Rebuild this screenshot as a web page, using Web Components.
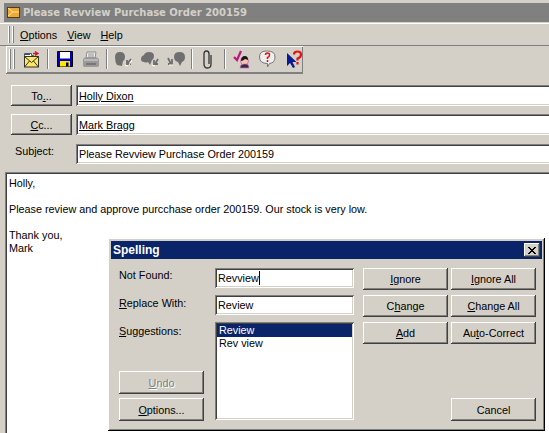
<!DOCTYPE html>
<html>
<head>
<meta charset="utf-8">
<title>Please Revview Purchase Order 200159</title>
<style>
  html, body { margin: 0; padding: 0; height: 100%; overflow: hidden; background: #d4d0c8; }
  body { font: 10.8px "Liberation Sans", sans-serif; color: #000; }
  u { text-underline-offset: 1px; }
</style>
</head>
<body>

<mail-window>
  <title-bar slot="title">Please Revview Purchase Order 200159</title-bar>
  <menu-bar slot="menu">
    <span><u>O</u>ptions</span>
    <span><u>V</u>iew</span>
    <span><u>H</u>elp</span>
  </menu-bar>
  <tool-bar slot="tools"></tool-bar>
  <addr-row slot="addr" label="To..." key="." value="Holly Dixon" link></addr-row>
  <addr-row slot="addr" label="Cc..." key="C" value="Mark Bragg" link></addr-row>
  <addr-row slot="addr" plain label="Subject:" value="Please Revview Purchase Order 200159"></addr-row>
  <mail-body slot="body">
    <div>Holly,</div>
    <div>&nbsp;</div>
    <div>Please review and approve purcchase order 200159. Our stock is very low.</div>
    <div>&nbsp;</div>
    <div>Thank you,</div>
    <div>Mark</div>
  </mail-body>
  <spell-dialog slot="dialog"></spell-dialog>
</mail-window>

<script>
// shared look of the old 3d controls
const raised = 'box-shadow: inset -1px -1px 0 #404040, inset 1px 1px 0 #fff, inset -2px -2px 0 #808080;'
const sunken = 'box-shadow: inset 1px 1px 0 #808080, inset -1px -1px 0 #fff, inset 2px 2px 0 #404040, inset -2px -2px 0 #d4d0c8;'
const uiFont = '10.8px "Liberation Sans", sans-serif'

class MailWindow extends HTMLElement {
  constructor() {
    super();
    this.attachShadow({ mode: 'open' });
    this.shadowRoot.innerHTML = `
      <style>
        :host { display: flex; flex-direction: column; position: relative; width: 549px; height: 433px; overflow: hidden; background: #d4d0c8; }
        .addr { display: flex; flex-direction: column; gap: 8px; padding: 12px 0 0 11px; }
      </style>
      <slot name="title"></slot>
      <slot name="menu"></slot>
      <slot name="tools"></slot>
      <div class="addr"><slot name="addr"></slot></div>
      <slot name="body"></slot>
      <slot name="dialog"></slot>
    `;
  }
}

class TitleBar extends HTMLElement {
  constructor() {
    super();
    this.attachShadow({ mode: 'open' });
    this.shadowRoot.innerHTML = `
      <style>
        :host { display: flex; align-items: center; gap: 3px; height: 19px; margin: 3px 0 1px 4px; padding-left: 3px; background: #808080; color: #d4d0c8; font: bold 10px "DejaVu Sans", sans-serif; white-space: nowrap; }
        svg { display: block; }
      </style>
      <svg width="13" height="11" viewBox="0 0 13 11">
        <rect x="0.500" y="0.500" width="12" height="10" fill="#f0a830" stroke="#5a3a10"/>
        <path d="M1 1l5 4 -5 4M6 5h6" fill="none" stroke="#ffe9b0"/>
      </svg>
      <slot></slot>
    `;
  }
}

class MenuBar extends HTMLElement {
  constructor() {
    super();
    this.attachShadow({ mode: 'open' });
    this.shadowRoot.innerHTML = `
      <style>
        :host { display: flex; align-items: center; gap: 10px; height: 21px; padding-left: 9px; border-top: 1px solid #fff; border-bottom: 1px solid #808080; }
        .grip { width: 1px; height: 17px; background: #808080; box-shadow: -1px 0 0 #fff, 3px 0 0 #fff, 4px 0 0 #808080; }
        ::slotted(span) { display: block; font: ${uiFont}; }
      </style>
      <div class="grip"></div>
      <slot></slot>
    `;
  }
}

class ToolBar extends HTMLElement {
  constructor() {
    super();
    this.attachShadow({ mode: 'open' });
    const gray = '#6f6f6f';
    this.shadowRoot.innerHTML = `
      <style>
        :host { display: flex; align-items: center; box-sizing: border-box; width: 297px; height: 27px; margin-left: 6px; padding: 0 0 1px 4px; box-shadow: inset 1px 1px 0 #fff, inset -1px -1px 0 #808080, 0 1px 0 #808080; }
        .grip { width: 1px; height: 20px; margin-right: 9px; background: #808080; box-shadow: -1px 0 0 #fff, 3px 0 0 #fff, 4px 0 0 #808080; }
        .sep { width: 1px; height: 20px; background: #808080; box-shadow: 1px 0 0 #fff; }
        svg { display: block; flex: none; }
      </style>
      <div class="grip"></div>
      <svg style="margin-left:3px" width="17" height="17" viewBox="0 0 17 17">
        <path d="M1.500 2.500h7v2h2v1h-9z" fill="#fff" stroke="#555"/>
        <path d="M2 3.500h5" stroke="#2050b0"/>
        <path d="M10 2.500h4M12 .5l3 2 -3 2" fill="none" stroke="#d0182c" stroke-width="1.300"/>
        <rect x="1.500" y="5.500" width="14" height="10.500" fill="#ffe860" stroke="#333"/>
        <path d="M1.500 5.500l7 6 7 -6M1.500 16l5 -6M15.500 16l-5 -6" fill="none" stroke="#333"/>
      </svg>
      <div class="sep" style="margin-left:7px"></div>
      <svg style="margin-left:9px" width="16" height="16" viewBox="0 0 16 16">
        <path d="M.5 .5h15v15h-15z" fill="#0000c0" stroke="#000"/>
        <rect x="3" y="1" width="10" height="6.500" fill="#fff"/>
        <rect x="3" y="10" width="10" height="5.500" fill="#ffe800"/>
        <rect x="9" y="11.500" width="2.500" height="4" fill="#000"/>
      </svg>
      <svg style="margin-left:9px" width="18" height="17" viewBox="0 0 18 17">
        <path d="M5 1h9l-1 6H4z" fill="#f4f4f4" stroke="#8a8a8a"/>
        <path d="M6 3h6M6 5h6" stroke="#8a8a8a"/>
        <path d="M1 8l3-2h10l3 2v7l-1 1H2l-1-1z" fill="#9a9a9a"/>
        <path d="M2 9h14" stroke="#d8d8d8"/>
        <rect x="4" y="12" width="10" height="2" fill="#777"/>
      </svg>
      <div class="sep" style="margin-left:6px"></div>
      <svg style="margin-left:8px" width="17" height="16" viewBox="0 0 17 16">
        <path d="M0 6q0-5 5-5 5 0 5 5 0 3-2 4l-1 5-5-1q-2-3-2-8z" fill="${gray}"/>
        <path d="M16 8l-4 5M12 9v4h4" fill="none" stroke="${gray}" stroke-width="1.800"/>
        <path d="M10 14l3 1M17 9l-3 5" stroke="#fff"/>
      </svg>
      <svg style="margin-left:9px" width="18" height="16" viewBox="0 0 18 16">
        <path d="M0 8q0-3 3-4 1-3 5-3 5 0 5 4 0 3-2 4l-2 5-2-3q-2 1-4 0-3 0-3-3z" fill="${gray}"/>
        <path d="M17 8l-3 5M13 9v4h4" fill="none" stroke="${gray}" stroke-width="1.800"/>
        <path d="M11 14l3 1" stroke="#fff"/>
      </svg>
      <svg style="margin-left:8px" width="18" height="16" viewBox="0 0 18 16">
        <path d="M7 6q0-5 5.500-5 5.500 0 5.500 5 0 4-3 5l-2 4-2-4q-4-1-4-5z" fill="${gray}"/>
        <path d="M1 7l3 6M5 8v5H1" fill="none" stroke="${gray}" stroke-width="1.800"/>
        <path d="M2 14h4" stroke="#fff"/>
      </svg>
      <div class="sep" style="margin-left:6px"></div>
      <svg style="margin-left:10px" width="11" height="19" viewBox="0 0 11 19">
        <path d="M9 5v9q0 4-3.500 4T2 14V4q0-3 2.500-3T7 4v10" fill="none" stroke="#333" stroke-width="1.300"/>
      </svg>
      <div class="sep" style="margin-left:11px"></div>
      <svg style="margin-left:8px" width="18" height="19" viewBox="0 0 18 19">
        <path d="M1 7l3 3 4-9" fill="none" stroke="#c01878" stroke-width="2.200"/>
        <circle cx="11.500" cy="11" r="4" fill="#f0c8a8" stroke="#d070c0"/>
        <path d="M8 11q0-5 4-5 3 0 3 4l-3-1q-2 2-4 2z" fill="#181818"/>
        <path d="M7 18q0-4 4-4h2q3 0 3 4z" fill="#303040" stroke="#d070c0" stroke-width=".7"/>
      </svg>
      <svg style="margin-left:8px" width="17" height="18" viewBox="0 0 17 18">
        <path d="M8.500 1q7.500 0 7.500 6t-5.500 6.500l-2 3.500v-3.500q-8 0-8-6.500t8-6z" fill="#eee" stroke="#777"/>
        <path d="M6.500 5q0-2 2-2t2 2-2 2.500v1.500" fill="none" stroke="#e01010" stroke-width="1.500"/>
        <path d="M8.500 10v2" stroke="#e01010" stroke-width="1.500"/>
      </svg>
      <svg style="margin-left:10px" width="17" height="18" viewBox="0 0 17 18">
        <path d="M1 3v13l3-3 3 5 2-1-2.500-5h4z" fill="#0a1a90"/>
        <path d="M8 4.500q0-3 3.500-3t3.500 3-3.500 4v2" fill="none" stroke="#e81010" stroke-width="2.200"/>
        <path d="M11.500 12v2.500" stroke="#e81010" stroke-width="2.200"/>
      </svg>
    `;
  }
}

class WinButton extends HTMLElement {
  constructor() {
    super();
    this.attachShadow({ mode: 'open' });
    this.shadowRoot.innerHTML = `
      <style>
        :host { display: flex; align-items: center; justify-content: center; box-sizing: border-box; height: 22px; background: #d4d0c8; font: ${uiFont}; white-space: nowrap; ${raised} }
        :host([disabled]) { color: #808080; text-shadow: 1px 1px 0 #fff; }
      </style>
      <slot></slot>
    `;
  }
}
customElements.define('win-button', WinButton);

class AddrRow extends HTMLElement {
  constructor() {
    super();
    this.attachShadow({ mode: 'open' });
    const label = this.getAttribute('label');
    const key = this.getAttribute('key');
    const value = this.getAttribute('value');
    const shownLabel = key ? label.replace(key, '<u>' + key + '</u>') : label;
    const left = this.hasAttribute('plain')
      ? `<div class="plain">${shownLabel}</div>`
      : `<win-button class="btn">${shownLabel}</win-button>`;
    const shownValue = this.hasAttribute('link') ? `<u>${value}</u>` : value;
    this.shadowRoot.innerHTML = `
      <style>
        :host { display: flex; height: 21px; gap: 4px; font: ${uiFont}; }
        :host([plain]) { margin-top: 1px; height: 20px; }
        .btn { width: 61px; height: 21px; }
        .plain { width: 61px; padding-left: 4px; box-sizing: border-box; line-height: 14px; }
        .value { flex: 1; margin-right: -4px; display: flex; align-items: center; padding-left: 3px; background: #fff; white-space: nowrap; ${sunken} }
      </style>
      ${left}
      <div class="value"><span>${shownValue}</span></div>
    `;
  }
}

class MailBody extends HTMLElement {
  constructor() {
    super();
    this.attachShadow({ mode: 'open' });
    this.shadowRoot.innerHTML = `
      <style>
        :host { display: block; flex: 1; margin: 8px -4px -4px 5px; padding: 5px 0 0 4px; background: #fff; font: 10.8px/13px "Liberation Sans", sans-serif; ${sunken} }
      </style>
      <slot></slot>
    `;
  }
}

class SpellDialog extends HTMLElement {
  constructor() {
    super();
    this.attachShadow({ mode: 'open' });
    this.shadowRoot.innerHTML = `
      <style>
        :host { position: absolute; left: 108px; top: 238px; width: 437px; height: 193px; box-sizing: border-box; padding: 3px; background: #d4d0c8; font: ${uiFont}; box-shadow: inset -1px -1px 0 #000, inset 1px 1px 0 #fff, inset -2px -2px 0 #808080; }
        .head { display: flex; align-items: center; justify-content: space-between; height: 18px; padding: 0 2px; background: #0a246a; color: #fff; font: bold 12px "Liberation Sans", sans-serif; }
        .close { width: 16px; height: 14px; background: #d4d0c8; box-sizing: border-box; ${raised} display: flex; align-items: center; justify-content: center; }
        .grid { display: grid; grid-template-columns: 96px 139px 94px 88px; grid-template-rows: 22px 22px 99px; row-gap: 5px; padding: 9px 0 0 8px; }
        .lbl { line-height: 15px; }
        .r2 { padding-top: 1px; }
        .field { box-sizing: border-box; height: 20px; background: #fff; display: flex; align-items: center; padding-left: 3px; ${sunken} }
        .caret { display: inline-block; width: 1px; height: 14px; background: #000; }
        .c3 { margin-left: 9px; width: 85px; }
        .c4 { margin-left: 3px; width: 85px; }
        .left { display: flex; flex-direction: column; }
        .left .lbl { flex: 1; padding-top: 2px; }
        .left win-button { width: 85px; height: 23px; margin-top: 4px; }
        .list { box-sizing: border-box; margin-bottom: 1px; padding: 2px; background: #fff; line-height: 13px; ${sunken} }
        .sel { background: #0a246a; color: #fff; padding-left: 2px; }
        .opt { padding-left: 2px; }
        .stack { display: flex; flex-direction: column; justify-content: space-between; }
        .cancel { height: 23px; }
      </style>
      <div class="head">
        <span>Spelling</span>
        <span class="close">
          <svg width="8" height="7" viewBox="0 0 8 7"><path d="M0 0l7 7M1 0l7 7M7 0l-7 7M8 0l-7 7" stroke="#000" fill="none"/></svg>
        </span>
      </div>
      <div class="grid">
        <div class="lbl">Not Found:</div>
        <div class="field"><span>Revview</span><span class="caret"></span></div>
        <win-button class="c3"><u>I</u>gnore</win-button>
        <win-button class="c4"><u>I</u>gnore All</win-button>

        <div class="lbl r2"><u>R</u>eplace With:</div>
        <div class="field"><span>Review</span></div>
        <win-button class="c3">C<u>h</u>ange</win-button>
        <win-button class="c4"><u>C</u>hange All</win-button>

        <div class="left">
          <div class="lbl"><u>S</u>uggestions:</div>
          <win-button disabled><u>U</u>ndo</win-button>
          <win-button><u>O</u>ptions...</win-button>
        </div>
        <div class="list">
          <div class="sel">Review</div>
          <div class="opt">Rev view</div>
        </div>
        <win-button class="c3"><u>A</u>dd</win-button>
        <div class="c4 stack">
          <win-button>Au<u>t</u>o-Correct</win-button>
          <win-button class="cancel">Cancel</win-button>
        </div>
      </div>
    `;
  }
}

customElements.define('mail-window', MailWindow);
customElements.define('title-bar', TitleBar);
customElements.define('menu-bar', MenuBar);
customElements.define('tool-bar', ToolBar);
customElements.define('addr-row', AddrRow);
customElements.define('mail-body', MailBody);
customElements.define('spell-dialog', SpellDialog);
</script>
</body>
</html>
